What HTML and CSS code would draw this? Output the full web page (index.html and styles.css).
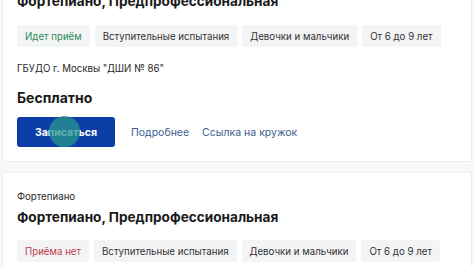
FILE: index.html
```html
<!DOCTYPE html>
<html lang="ru">
<head>
<meta charset="utf-8">
<link rel="stylesheet" href="styles.css">
</head>
<body>
<div class="page">
  <div class="card card-first">
    <h2 class="title">Фортепиано, Предпрофессиональная</h2>
    <div class="tags">
      <span class="tag tag-open">Идет приём</span>
      <span class="tag">Вступительные испытания</span>
      <span class="tag">Девочки и мальчики</span>
      <span class="tag">От 6 до 9 лет</span>
    </div>
    <div class="org">ГБУДО г. Москвы "ДШИ № 86"</div>
    <div class="price">Бесплатно</div>
    <div class="actions">
      <button class="btn">Записаться<span class="touch"></span></button>
      <a class="link">Подробнее</a>
      <a class="link">Ссылка на кружок</a>
    </div>
  </div>
  <div class="card card-second">
    <div class="category">Фортепиано</div>
    <h2 class="title">Фортепиано, Предпрофессиональная</h2>
    <div class="tags">
      <span class="tag tag-closed">Приёма нет</span>
      <span class="tag">Вступительные испытания</span>
      <span class="tag">Девочки и мальчики</span>
      <span class="tag">От 6 до 9 лет</span>
    </div>
  </div>
</div>
</body>
</html>
```
FILE: styles.css
```css
html, body {
  margin: 0;
  padding: 0;
  background: #ffffff;
  overflow: hidden;
}
body {
  font-family: Inter, "Noto Sans", sans-serif;
  color: #1f1f1f;
}
.page {
  display: flex;
  flex-direction: column;
  gap: 10px;
  margin-top: -10px;
  background: #f7f8f9;
  padding: 0 2px;
}
.card {
  background: #ffffff;
  border: 1px solid #eceef0;
  padding: 0 14px 14px;
}
.card-first {
  border-top: none;
}
.card-second {
  padding-top: 17px;
}
.title {
  margin: 0 0 13px;
  font-size: 13.6px;
  line-height: 22px;
  font-weight: 700;
  color: #1a1a1a;
  white-space: nowrap;
}
.category {
  font-size: 9.7px;
  line-height: 14px;
  color: #2a2a2a;
  margin-bottom: 2px;
}
.card-second .title {
  margin-bottom: 12px;
}
.tags {
  display: flex;
  gap: 5px;
}
.tag {
  flex: none;
  display: inline-flex;
  align-items: center;
  height: 22px;
  padding: 0 8px;
  background: #f3f4f5;
  border-radius: 2px;
  font-size: 9.7px;
  color: #333;
  white-space: nowrap;
}
.tag-open { color: #2e8b5b; }
.tag-closed { color: #c2414b; }
.org {
  margin-top: 15px;
  font-size: 9.7px;
  line-height: 14px;
  color: #2a2a2a;
}
.price {
  margin-top: 12px;
  font-size: 14px;
  line-height: 20px;
  font-weight: 700;
  color: #1a1a1a;
}
.actions {
  margin-top: 9px;
  display: flex;
  align-items: center;
}
.btn {
  position: relative;
  width: 98px;
  height: 30px;
  border: none;
  border-radius: 3px;
  background: #0d3ea8;
  color: #fff;
  font-family: Inter, "Noto Sans", sans-serif;
  font-weight: 700;
  font-size: 10.5px;
  padding: 0;
  margin-right: 16px;
}
.touch {
  position: absolute;
  left: 32px;
  top: -1px;
  width: 31px;
  height: 31px;
  border-radius: 50%;
  background: rgba(40, 150, 140, 0.75);
}
.link {
  font-size: 10.5px;
  color: #3b5d8f;
  margin-right: 13px;
  white-space: nowrap;
}
```
